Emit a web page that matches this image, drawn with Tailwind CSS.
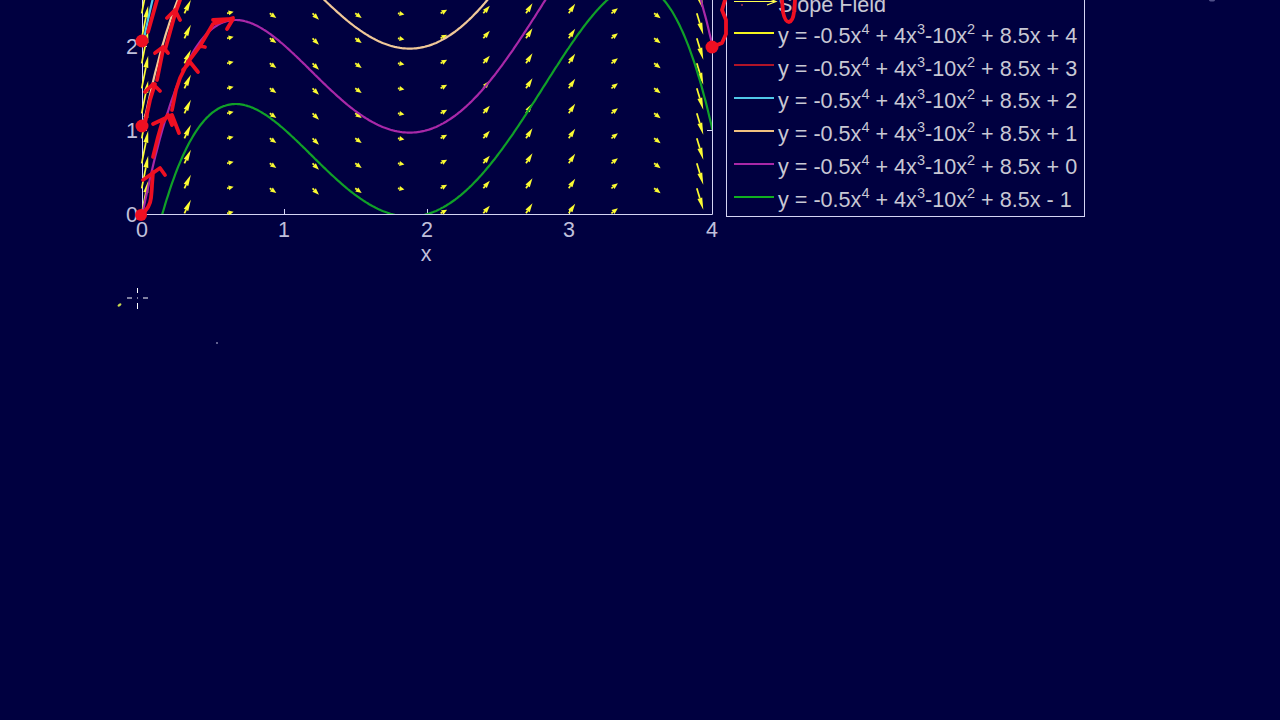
<!DOCTYPE html>
<html lang="en">
<head>
    <meta charset="UTF-8">
    <title>Slope Field</title>
    <script src="https://cdn.jsdelivr.net/npm/@tailwindcss/browser@4"></script>
</head>
<body class="bg-[#000040]">

<div class="relative w-[1280px] h-[720px] overflow-hidden bg-[#000040] font-['Liberation_Sans',Arial,sans-serif] flex items-start">

    <!-- plot -->
    <svg id="plot" class="block shrink-0 w-[726px] h-[270px]" viewBox="0 0 726 270">
        <defs>
            <clipPath id="plotArea"><rect x="142" y="-20" width="570" height="234"></rect></clipPath>
            <clipPath id="fieldArea"><rect x="130" y="-20" width="582" height="235"></rect></clipPath>
        </defs>
        <g stroke="#d4d4f4" stroke-width="1" fill="none">
            <path d="M142.500 0V214.500H712.500V0"></path>
            <path d="M284.500 214V209M427.500 214V209M569.500 214V209"></path>
            <path d="M142 130.500H147M142 46.500H147M712 130.500H707M712 46.500H707"></path>
        </g>
        <g id="field" clip-path="url(#fieldArea)"></g>
        <g id="curves" clip-path="url(#plotArea)" fill="none" stroke-width="2.2"></g>
        <g fill="#c0c0dc" font-size="21.5" text-anchor="middle">
            <text x="142" y="237">0</text>
            <text x="284" y="237">1</text>
            <text x="427" y="237">2</text>
            <text x="569" y="237">3</text>
            <text x="712" y="237">4</text>
            <text x="426" y="261">x</text>
            <text x="132" y="222">0</text>
            <text x="132" y="138">1</text>
            <text x="132" y="54">2</text>
        </g>
    </svg>

    <!-- legend -->
    <div class="shrink-0 mt-[-15px] w-[359px] border border-[#d4d4f4] text-[21.6px] text-[#c8c8d4] leading-none">
        <div class="flex items-center h-[32.8px] pl-[7px]">
            <svg class="w-[44px] h-[12px] shrink-0" viewBox="0 0 44 12" fill="none" stroke="#ffff50" stroke-width="1.2"><path d="M0 5.500H41M33 2L42 5.500L33 9"></path></svg>
            <span class="mt-[5px]">Slope Field</span>
        </div>
        <div class="flex items-center h-[32.8px] pl-[7px]">
            <span class="w-[40px] h-[2px] bg-[#f4f41e] shrink-0 -mt-[5px]"></span>
            <span class="ml-[4px] mt-[1px] whitespace-pre">y = -0.5x<sup class="text-[14.5px] -top-[9px]">4</sup> + 4x<sup class="text-[14.5px] -top-[9px]">3</sup>-10x<sup class="text-[14.5px] -top-[9px]">2</sup> + 8.5x + 4</span>
        </div>
        <div class="flex items-center h-[32.8px] pl-[7px]">
            <span class="w-[40px] h-[2px] bg-[#b01428] shrink-0 -mt-[5px]"></span>
            <span class="ml-[4px] mt-[1px] whitespace-pre">y = -0.5x<sup class="text-[14.5px] -top-[9px]">4</sup> + 4x<sup class="text-[14.5px] -top-[9px]">3</sup>-10x<sup class="text-[14.5px] -top-[9px]">2</sup> + 8.5x + 3</span>
        </div>
        <div class="flex items-center h-[32.8px] pl-[7px]">
            <span class="w-[40px] h-[2px] bg-[#50c8e8] shrink-0 -mt-[5px]"></span>
            <span class="ml-[4px] mt-[1px] whitespace-pre">y = -0.5x<sup class="text-[14.5px] -top-[9px]">4</sup> + 4x<sup class="text-[14.5px] -top-[9px]">3</sup>-10x<sup class="text-[14.5px] -top-[9px]">2</sup> + 8.5x + 2</span>
        </div>
        <div class="flex items-center h-[32.8px] pl-[7px]">
            <span class="w-[40px] h-[2px] bg-[#f0c080] shrink-0 -mt-[5px]"></span>
            <span class="ml-[4px] mt-[1px] whitespace-pre">y = -0.5x<sup class="text-[14.5px] -top-[9px]">4</sup> + 4x<sup class="text-[14.5px] -top-[9px]">3</sup>-10x<sup class="text-[14.5px] -top-[9px]">2</sup> + 8.5x + 1</span>
        </div>
        <div class="flex items-center h-[32.8px] pl-[7px]">
            <span class="w-[40px] h-[2px] bg-[#a828a8] shrink-0 -mt-[5px]"></span>
            <span class="ml-[4px] mt-[1px] whitespace-pre">y = -0.5x<sup class="text-[14.5px] -top-[9px]">4</sup> + 4x<sup class="text-[14.5px] -top-[9px]">3</sup>-10x<sup class="text-[14.5px] -top-[9px]">2</sup> + 8.5x + 0</span>
        </div>
        <div class="flex items-center h-[32.8px] pl-[7px]">
            <span class="w-[40px] h-[2px] bg-[#10b020] shrink-0 -mt-[5px]"></span>
            <span class="ml-[4px] mt-[1px] whitespace-pre">y = -0.5x<sup class="text-[14.5px] -top-[9px]">4</sup> + 4x<sup class="text-[14.5px] -top-[9px]">3</sup>-10x<sup class="text-[14.5px] -top-[9px]">2</sup> + 8.5x - 1</span>
        </div>
    </div>

    <!-- pen strokes drawn on top of the figure -->
    <svg class="absolute left-0 top-0 w-[1280px] h-[720px]" viewBox="0 0 1280 720">
        <g fill="none" stroke="#ee0f22" stroke-width="3.8" stroke-linecap="round" stroke-linejoin="round">
            <path d="M141 215Q150 208 151 198T152 185L153 172M143 180L160 168L165 175"></path>
            <path d="M153 157L158 137L162 123L168 115M153 124L172 115L179 133M168 115L172 125"></path>
            <path d="M145 123L150 100L155 84M145 92L153 84L160 91"></path>
            <path d="M157 80L163 50M155 53L163 47L168 53"></path>
            <path d="M165 50L175 14M167 18L175 10L180 20M175 14L180 0"></path>
            <path d="M148 32L157 0"></path>
            <path d="M172 110L176 90L180 78L187 64M183 70L190 62L198 72"></path>
            <path d="M188 62L200 46L213 24L233 18M213 20L233 19L227 29M200 46L205 47"></path>
            <path d="M712 47L722 43L726 34L726 20L722 10L725 0"></path>
            <path d="M782 0L783 12Q785 22 789 22Q793 21 794 12L795 0"></path>
        </g>
        <g fill="#ee0f22">
            <circle cx="141" cy="215" r="6"></circle>
            <circle cx="142" cy="126" r="6.500"></circle>
            <circle cx="142" cy="41" r="6.500"></circle>
            <circle cx="712" cy="47" r="6.500"></circle>
        </g>
        <circle cx="742" cy="5" r="1" fill="#a03050"></circle>
        <!-- pen cursor and specks -->
        <path d="M127 298H132M143 298H148M137.500 288V293M137.500 303V309M137 298H138" stroke="#fff" stroke-width="1" fill="none"></path>
        <ellipse cx="119.500" cy="305" rx="2.200" ry="1.300" fill="#c8d850" transform="rotate(-35 119.500 305)"></ellipse>
        <circle cx="217" cy="343" r="1" fill="#8080a8"></circle>
        <ellipse cx="1212" cy="0" rx="3" ry="1.500" fill="#50508a"></ellipse>
    </svg>
</div>

<script>
    const NS = 'http://www.w3.org/2000/svg';
    const toX = x => 142.5 + x * 142.5;
    const toY = y => 214 - y * 84;
    const f = (x, c) => -0.5 * x ** 4 + 4 * x ** 3 - 10 * x ** 2 + 8.5 * x + c;
    const slope = x => -2 * x ** 3 + 12 * x ** 2 - 20 * x + 8.5;

    // curves, back to front
    const curves = [[4, '#f4f41e'], [3, '#b01428'], [2, '#50c8e8'], [1, '#f0c898'], [0, '#a828a8'], [-1, '#10a028']];
    const curveGroup = document.getElementById('curves');
    curves.forEach(([c, color]) => {
      let d = '';
      for (let x = 0; x <= 4.001; x += 0.01) {
        d += (d ? 'L' : 'M') + toX(x).toFixed(1) + ' ' + toY(f(x, c)).toFixed(1);
      }
      const path = document.createElementNS(NS, 'path');
      path.setAttribute('d', d);
      path.setAttribute('stroke', color);
      curveGroup.appendChild(path);
    });

    // slope field arrows, base sits on the grid point
    const field = document.getElementById('field');
    const px = 6.5;
    for (let i = 0; i < 14; i++) {
      const x = i * 0.3;
      const bx = 141.7 + i * 42.7;
      const rise = -slope(x) * 84 / 142.5 * px;
      for (let j = 0; j < 10; j++) {
        const by = 213.3 - j * 25;
        // arrows that would leave through the bottom axis are dropped
        if (by + rise > 214) continue;
        const tx = bx + px, ty = by + rise;
        const len = Math.hypot(px, rise);
        const ux = px / len, uy = rise / len;
        const headLen = Math.min(12, len * 0.75), w = 2.5;
        const hx = tx - ux * headLen, hy = ty - uy * headLen;
        const line = document.createElementNS(NS, 'line');
        line.setAttribute('x1', bx);
        line.setAttribute('y1', by);
        line.setAttribute('x2', hx);
        line.setAttribute('y2', hy);
        line.setAttribute('stroke', '#fbfb32');
        line.setAttribute('stroke-width', '1.7');
        field.appendChild(line);
        const head = document.createElementNS(NS, 'polygon');
        head.setAttribute('points', `${tx},${ty} ${hx - uy * w},${hy + ux * w} ${hx + uy * w},${hy - ux * w}`);
        head.setAttribute('fill', '#fbfb32');
        field.appendChild(head);
      }
    }
</script>

</body>
</html>
